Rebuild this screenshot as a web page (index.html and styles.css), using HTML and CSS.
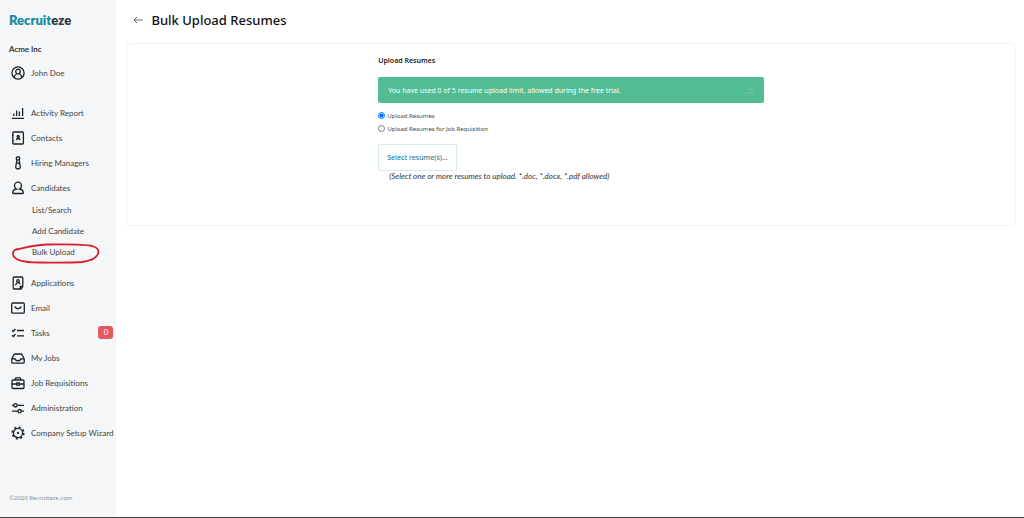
FILE: index.html
```html
<!DOCTYPE html>
<html lang="en">
<head>
  <meta charset="UTF-8" />
  <meta name="viewport" content="width=device-width, initial-scale=1.0"/>
  <title>Bulk Upload Resumes - Recruiteze</title>
  <link rel="stylesheet" href="styles.css">
</head>
<body>
  <div class="app">
    <aside class="sidebar">
      <a href="#" class="logo"><span>Recruit</span>eze</a>
      <div class="company">Acme Inc</div>
      <a href="#" class="nav-link user">
        <svg class="icon" viewBox="0 0 14 14"><circle cx="7" cy="7" r="6.1"/><circle cx="7" cy="5.5" r="2.3"/><path d="M3.2 11.6c.2-2 1.3-3.2 2.4-3.6M10.8 11.6c-.2-2-1.3-3.2-2.4-3.6"/></svg>
        John Doe
      </a>

      <nav>
        <ul class="menu">
          <li><a href="#" class="nav-link">
            <svg class="icon" viewBox="0 0 14 14"><path d="M1 12.3h12M2.8 10V7.5M5.6 10V4.5M8.4 10V5.5M11.6 10V2"/></svg>
            Activity Report</a></li>
          <li><a href="#" class="nav-link">
            <svg class="icon" viewBox="0 0 14 14"><rect x="1.8" y="1" width="10.6" height="12" rx="1"/><circle cx="7.2" cy="5.6" r="1.1"/><path d="M5.5 9.3c0-2.4 3.4-2.4 3.4 0M1 4.5h1.5M1 9.5h1.5"/></svg>
            Contacts</a></li>
          <li><a href="#" class="nav-link">
            <svg class="icon" viewBox="0 0 14 14"><rect x="5.300" y="1" width="3.400" height="2.800" rx="1"/><path d="M5.900 4L4.700 11c-.2 2.400 4.800 2.400 4.600 0L8.100 4M6.300 6.500l1.800 1.500"/></svg>
            Hiring Managers</a></li>
          <li><a href="#" class="nav-link">
            <svg class="icon" viewBox="0 0 14 14"><path d="M5.4 8C4 7.200 3.500 5.900 3.500 4.600a3.500 3.500 0 0 1 7 0C10.500 5.900 10 7.200 8.600 8c2 .4 3.600 1.200 3.800 3.600 0 .5-.2.900-.8.900H2.400c-.6 0-.8-.4-.8-.9C1.800 9.200 3.400 8.400 5.400 8z"/></svg>
            Candidates</a>
            <ul class="submenu">
              <li><a href="#">List/Search</a></li>
              <li><a href="#">Add Candidate</a></li>
              <li class="marked"><a href="#">Bulk Upload</a>
                <svg class="marker" viewBox="0 0 90 22"><path d="M4 7C14 5 22 1.500 38 1.500c20 0 34-.5 43 1.500 6 1.500 7 4 6 7.500-1 4-5 7-16 8.500-13 1-28 .5-43 .5C14 19.500 3 17 2 11.500 1.500 7.500 4 6 9 6"/></svg>
              </li>
            </ul>
          </li>
          <li><a href="#" class="nav-link">
            <svg class="icon" viewBox="0 0 14 14"><path d="M10 13H3.200a1 1 0 0 1-1-1V2a1 1 0 0 1 1-1h7.600a1 1 0 0 1 1 1v8.600zM9.300 12.600V10.500h2.300"/><circle cx="7" cy="4.900" r="1.300"/><path d="M4.600 9.500c.2-3 3.600-4 4.600-1.200"/></svg>
            Applications</a></li>
          <li><a href="#" class="nav-link">
            <svg class="icon" viewBox="0 0 14 14"><rect x=".7" y="2" width="12.600" height="10.200" rx="1"/><path d="M3.600 5.500C6 8.600 8 8.600 10.400 5.500"/></svg>
            Email</a></li>
          <li><a href="#" class="nav-link">
            <svg class="icon" viewBox="0 0 14 14"><path d="M1 4.300l1.300 1.200L4.500 3M1 9.300l1.300 1.200L4.500 8M6 4.500h7M6 9.800h7"/></svg>
            Tasks <span class="badge">0</span></a></li>
          <li><a href="#" class="nav-link">
            <svg class="icon" viewBox="0 0 14 14"><path d="M.8 7.800L3 3.600c.2-.4.500-.6 1-.6h6c.5 0 .8.2 1 .6l2.200 4.200v3.400c0 .6-.4 1-1 1H1.800c-.6 0-1-.4-1-1zM.8 7.800h3.400c.2 2.600 5.400 2.600 5.600 0h3.400"/></svg>
            My Jobs</a></li>
          <li><a href="#" class="nav-link">
            <svg class="icon" viewBox="0 0 14 14"><rect x="1" y="4" width="12" height="8.500" rx="1"/><path d="M4.500 4V2.600c0-.5.300-.8.800-.8h3.400c.5 0 .8.300.8.800V4M1 8h4.500M8.500 8H13M5.700 7h2.600v2.200H5.700z"/></svg>
            Job Requisitions</a></li>
          <li><a href="#" class="nav-link">
            <svg class="icon" viewBox="0 0 14 14"><path d="M1 4.300h1.500M6.300 4.300H13M1 10.200h5.700M10.500 10.200H13"/><circle cx="4.400" cy="4.300" r="1.700"/><circle cx="8.600" cy="10.200" r="1.700"/></svg>
            Administration</a></li>
          <li><a href="#" class="nav-link">
            <svg class="icon" viewBox="0 0 14 14"><circle cx="7" cy="7" r="4.600"/><circle class="teeth" cx="7" cy="7" r="5.800"/><circle cx="7" cy="7" r=".5"/></svg>
            Company Setup Wizard</a></li>
        </ul>
      </nav>
      <footer class="copyright">©2020 Recruiteze.com</footer>
    </aside>

    <main class="content">
      <header class="page-header">
        <a href="#" class="back" aria-label="Back">
          <svg viewBox="0 0 10 8"><path d="M9.500 4H1M4 1L1 4l3 3"/></svg>
        </a>
        <h1>Bulk Upload Resumes</h1>
      </header>

      <section class="card">
        <form class="upload-form">
          <h2>Upload Resumes</h2>
          <div class="alert">
            You have used 0 of 5 resume upload limit, allowed during the free trial.
            <button type="button" class="close" aria-label="Close">
              <svg viewBox="0 0 6 6"><path d="M1 1l2 2 2-2M0 5.500h6"/></svg>
            </button>
          </div>
          <div class="option">
            <input type="radio" name="target" id="resumes" checked>
            <label for="resumes">Upload Resumes</label>
          </div>
          <div class="option">
            <input type="radio" name="target" id="requisition">
            <label for="requisition">Upload Resumes for Job Requisition</label>
          </div>
          <button type="button" class="select-btn">Select resume(s)...</button>
          <p class="hint">(Select one or more resumes to upload. *.doc, *.docx, *.pdf allowed)</p>
        </form>
      </section>
    </main>
  </div>
</body>
</html>
```
FILE: styles.css
```css
* {
  box-sizing: border-box;
}

body {
  margin: 0;
  font-family: "Noto Sans", sans-serif;
  font-size: 7px;
  color: #333;
  background: #fff;
}

a {
  color: inherit;
  text-decoration: none;
}

ul {
  list-style: none;
  margin: 0;
  padding: 0;
}

.app {
  display: flex;
  min-height: 100vh;
  border-bottom: 1px solid #444;
}

/* Sidebar */
.sidebar {
  display: flex;
  flex-direction: column;
  flex: 0 0 116px;
  padding: 12px 3px 12px 9px;
  background: #f4f6f8;
  font-family: Lato, sans-serif;
  font-size: 8px;
}

.logo {
  font-size: 13px;
  font-weight: 800;
  line-height: 17px;
  color: #2f3b45;
}

.logo span {
  color: #168f9f;
}

.company {
  margin-top: 12px;
  line-height: 16px;
  font-weight: 600;
  color: #222;
}

.nav-link {
  display: flex;
  align-items: center;
  gap: 6px;
  height: 25px;
  padding-left: 2px;
  white-space: nowrap;
  color: #444;
}

.user {
  margin: 3px 0 15px;
}

.icon {
  flex: none;
  width: 14px;
  height: 14px;
  fill: none;
  stroke: #1d2226;
  stroke-width: 1.3;
}

.teeth {
  stroke-width: 1.6;
  stroke-dasharray: 2 2.555;
}

.submenu {
  padding-bottom: 7px;
}

.submenu li {
  height: 21px;
  padding-left: 23px;
  line-height: 21px;
  color: #444;
}

.marked {
  position: relative;
}

.marker {
  position: absolute;
  left: 2px;
  top: 1px;
  width: 90px;
  height: 22px;
  fill: none;
  stroke: #d8222b;
  stroke-width: 1.8;
  pointer-events: none;
}

.badge {
  width: 15px;
  margin-left: auto;
  border-radius: 3px;
  background: #e25a60;
  color: #fff;
  line-height: 13px;
  text-align: center;
}

.copyright {
  margin-top: auto;
  line-height: 14px;
  font-family: "Noto Sans", sans-serif;
  font-size: 6px;
  color: #8a8f94;
}

/* Page */
.content {
  flex: 1;
  padding: 9px 8px 9px 10px;
}

.page-header {
  display: flex;
  align-items: center;
  gap: 8px;
  padding-left: 7px;
}

.back {
  display: flex;
}

.back svg {
  width: 10px;
  height: 8px;
  fill: none;
  stroke: #666;
}

h1 {
  margin: 0;
  font-size: 13px;
  font-weight: 500;
  line-height: 22px;
  color: #111;
}

.card {
  margin-top: 12px;
  padding: 11px 20px 43px;
  border: 1px solid #f3f3f3;
  border-radius: 4px;
}

.upload-form {
  max-width: 386px;
  margin: 0 auto;
}

h2 {
  margin: 0 0 11px;
  font-size: 7px;
  font-weight: 600;
  line-height: 11px;
  color: #222;
}

.alert {
  display: flex;
  align-items: center;
  justify-content: space-between;
  height: 26px;
  margin-bottom: 6px;
  padding: 0 10px;
  border-radius: 2px;
  background: #52bc94;
  color: #fff;
}

.close {
  display: flex;
  padding: 0;
  border: 0;
  background: none;
}

.close svg {
  width: 6px;
  height: 6px;
  fill: none;
  stroke: #8dbf9f;
}

.option {
  display: flex;
  align-items: center;
  gap: 2px;
  height: 13px;
  font-size: 6px;
  color: #444;
}

.option input {
  width: 7px;
  height: 7px;
  margin: 0;
}

.select-btn {
  display: block;
  height: 27px;
  margin-top: 9px;
  padding: 0 8px;
  border: 1px solid #d5e8ee;
  border-radius: 2px;
  background: #fff;
  font-family: inherit;
  font-size: 7px;
  font-weight: 500;
  color: #1f7f92;
}

.hint {
  margin: 0 0 0 11px;
  font-family: Lato, sans-serif;
  font-size: 8px;
  font-style: italic;
  line-height: 11px;
}
```
